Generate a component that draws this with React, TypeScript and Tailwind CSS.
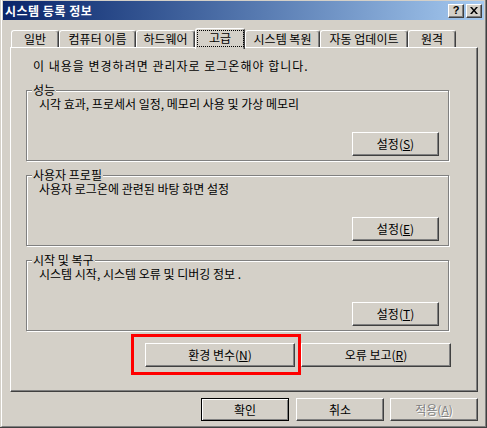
import React from "react";

const raised =
  "bg-[#d4d0c8] border-t border-l border-white border-r border-b border-r-[#404040] border-b-[#404040] shadow-[inset_-1px_-1px_0_#808080]";

function Btn({
  children,
  className = "",
  def = false,
  disabled = false,
}: {
  children: React.ReactNode;
  className?: string;
  def?: boolean;
  disabled?: boolean;
}) {
  const frame = def
    ? "bg-[#d4d0c8] border border-black shadow-[inset_1px_1px_0_#fff,inset_-1px_-1px_0_#808080]"
    : raised;
  return (
    <div
      className={`${frame} ${className} flex items-center justify-center leading-[16px] ${
        disabled ? "text-[#808080] [text-shadow:1px_1px_0_#fff]" : "text-black"
      }`}
    >
      {children}
    </div>
  );
}

function Group({
  legend,
  text,
  btn,
  className = "",
}: {
  legend: string;
  text: string;
  btn: React.ReactNode;
  className?: string;
}) {
  return (
    <div
      className={`relative h-[71px] w-[423px] border border-[#808080] shadow-[inset_1px_1px_0_#fff,1px_1px_0_#fff] flex flex-col pl-[12px] pt-[6px] pr-[9px] ${className}`}
    >
      <span className="absolute left-[5px] -top-[8px] px-[1px] bg-[#d4d0c8] leading-[14px]">
        {legend}
      </span>
      <div className="leading-[14px]">{text}</div>
      <Btn className="mt-auto mb-[4px] self-end w-[87px] h-[24px]">{btn}</Btn>
    </div>
  );
}

const tabCls =
  "mt-[2px] h-[17px] border-t border-l border-white border-r border-r-[#404040] rounded-t-[3px] shadow-[inset_-1px_0_0_#808080] flex items-center justify-center leading-[16px] whitespace-nowrap";

export default function App() {
  return (
    <div className="w-[487px] h-[428px] bg-[#d4d0c8] font-['Noto_Sans_CJK_KR',sans-serif] text-[12px] text-black">
      <div className="w-full h-full pl-px border-r border-b border-[#404040]">
        <div className="w-full h-full border-l border-white border-r border-b border-r-[#808080] border-b-[#808080] pt-px px-px pb-px flex flex-col">
          {/* Title bar */}
          <div className="h-[19px] flex items-center justify-between bg-linear-to-r from-[#0a246a] to-[#a6caf0] pl-[2px] pr-[2px]">
            <span className="text-white font-bold leading-[16px] tracking-[0.5px] whitespace-nowrap">
              시스템 등록 정보
            </span>
            <div className="flex gap-[2px]">
              <div
                className={`${raised} w-[16px] h-[14px] flex items-center justify-center`}
              >
                <span className="font-['Liberation_Sans',sans-serif] font-bold text-[11px] leading-none pb-px">
                  ?
                </span>
              </div>
              <div
                className={`${raised} w-[16px] h-[14px] flex items-center justify-center`}
              >
                <svg width="8" height="7" viewBox="0 0 8 7">
                  <path
                    d="M0 0h2l2 2.4L6 0h2L5 3.5 8 7H6L4 4.6 2 7H0l3-3.5z"
                    fill="#000"
                  />
                </svg>
              </div>
            </div>
          </div>

          {/* Body */}
          <div className="flex flex-col pt-[8px] pl-[7px] pr-[6px]">
            {/* Tabs */}
            <div className="flex items-start h-[19px] pl-[1px]">
              <div className={`${tabCls} w-[48px]`}>일반</div>
              <div className={`${tabCls} w-[77px]`}>컴퓨터 이름</div>
              <div className={`${tabCls} w-[59px]`}>하드웨어</div>
              <div className="relative z-10 w-[50px] h-[21px] bg-[#d4d0c8] border-t border-l border-white border-r border-r-[#404040] rounded-t-[3px] shadow-[inset_-1px_0_0_#808080] flex justify-center pt-[1px]">
                <span className="w-[47px] h-[17px] border border-dotted border-black flex items-center justify-center leading-[16px] pb-[2px]">
                  고급
                </span>
              </div>
              <div className={`${tabCls} w-[75px]`}>시스템 복원</div>
              <div className={`${tabCls} w-[88px]`}>자동 업데이트</div>
              <div className={`${tabCls} w-[48px]`}>원격</div>
            </div>

            {/* Panel */}
            <div className="h-[345px] border-t border-l border-white border-r border-b border-r-[#404040] border-b-[#404040] shadow-[inset_-1px_-1px_0_#808080] flex flex-col pl-[15px] pt-[10px]">
              <div className="ml-[7px] leading-[16px] tracking-[1px] whitespace-nowrap">
                이 내용을 변경하려면 관리자로 로그온해야 합니다.
              </div>

              <Group
                className="mt-[16px]"
                legend="성능"
                text="시각 효과, 프로세서 일정, 메모리 사용 및 가상 메모리"
                btn={
                  <>
                    설정(<u>S</u>)
                  </>
                }
              />
              <Group
                className="mt-[14px]"
                legend="사용자 프로필"
                text="사용자 로그온에 관련된 바탕 화면 설정"
                btn={
                  <>
                    설정(<u>E</u>)
                  </>
                }
              />
              <Group
                className="mt-[14px]"
                legend="시작 및 복구"
                text="시스템 시작, 시스템 오류 및 디버깅 정보 ."
                btn={
                  <>
                    설정(<u>T</u>)
                  </>
                }
              />

              <div className="mt-[12px] flex gap-[6px] pl-[119px]">
                <div className="relative">
                  <Btn className="w-[150px] h-[24px]">
                    환경 변수(<u>N</u>)
                  </Btn>
                  <div className="absolute -left-[14px] -top-[9px] -right-[6px] -bottom-[8px] border-[3px] border-[#ff0000]" />
                </div>
                <Btn className="w-[150px] h-[24px]">
                  오류 보고(<u>R</u>)
                </Btn>
              </div>
            </div>

            {/* Bottom buttons */}
            <div className="mt-[6px] flex justify-end">
              <Btn def className="w-[88px] h-[23px]">
                확인
              </Btn>
              <Btn className="ml-[7px] w-[88px] h-[23px]">취소</Btn>
              <Btn disabled className="ml-[6px] w-[88px] h-[23px]">
                적용(<u>A</u>)
              </Btn>
            </div>
          </div>
        </div>
      </div>
    </div>
  );
}
